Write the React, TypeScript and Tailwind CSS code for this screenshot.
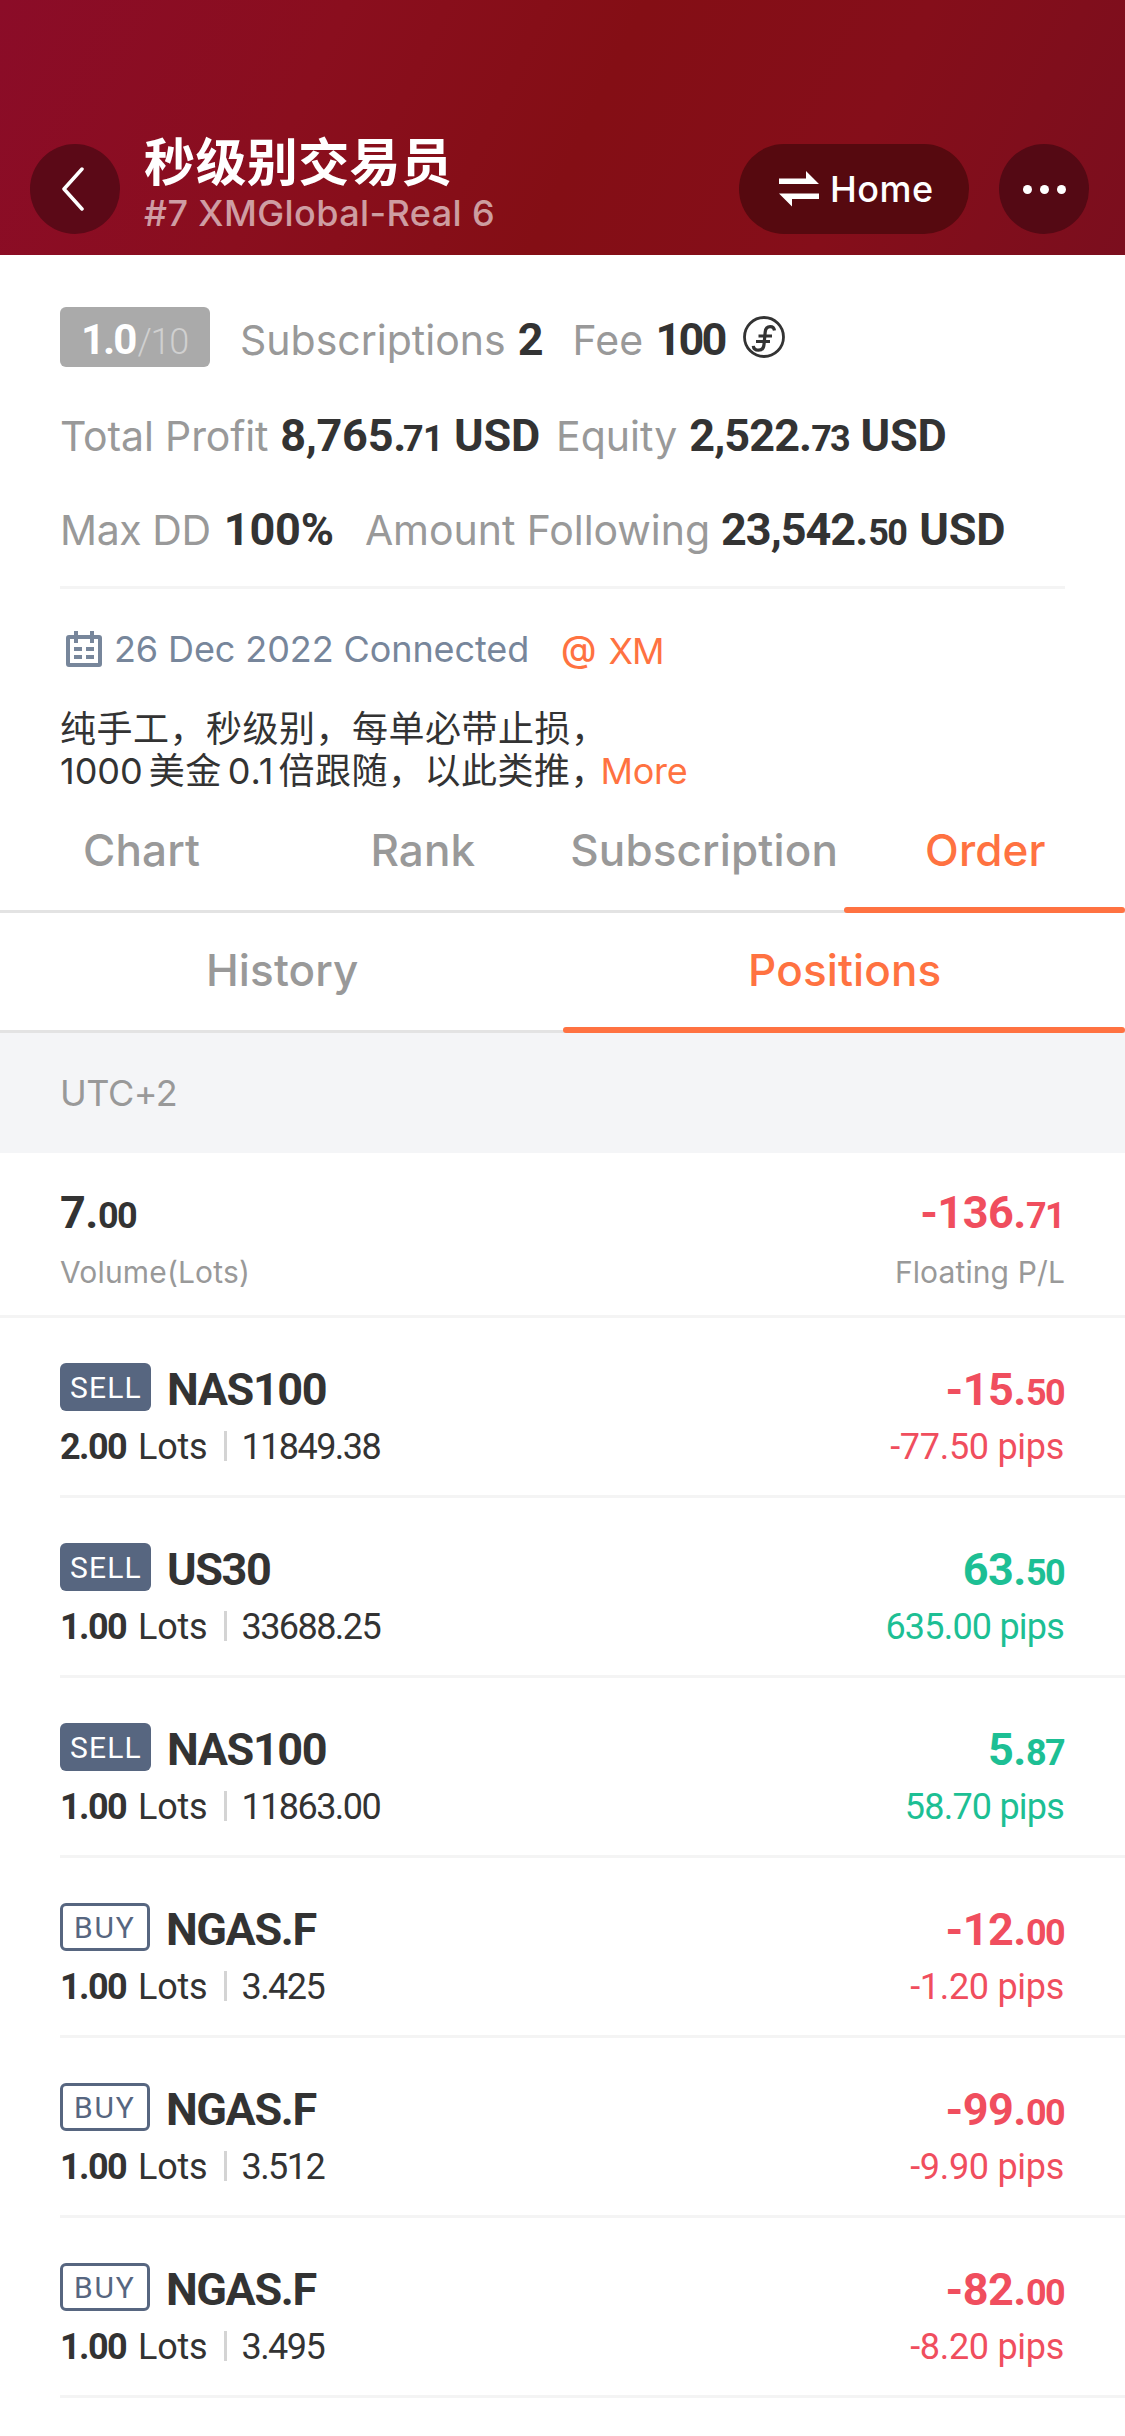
import React from 'react'

const positions = [
  { side: 'SELL', symbol: 'NAS100', lots: '2.00', price: '11849.38', profit: '-15.50', pips: '-77.50' },
  { side: 'SELL', symbol: 'US30', lots: '1.00', price: '33688.25', profit: '63.50', pips: '635.00' },
  { side: 'SELL', symbol: 'NAS100', lots: '1.00', price: '11863.00', profit: '5.87', pips: '58.70' },
  { side: 'BUY', symbol: 'NGAS.F', lots: '1.00', price: '3.425', profit: '-12.00', pips: '-1.20' },
  { side: 'BUY', symbol: 'NGAS.F', lots: '1.00', price: '3.512', profit: '-99.00', pips: '-9.90' },
  { side: 'BUY', symbol: 'NGAS.F', lots: '1.00', price: '3.495', profit: '-82.00', pips: '-8.20' },
]

function SwapIcon() {
  return (
    <svg viewBox="0 0 40 36" fill="currentColor" className="h-9 w-10">
      <path d="M0 7.5h27V0l13 13H0V7.5Z" />
      <path d="M40 28H13v7.5L0 22.5h40V28Z" />
    </svg>
  )
}

function CoinIcon({ className }: { className?: string }) {
  return (
    <svg viewBox="0 0 42 42" fill="none" stroke="currentColor" className={className}>
      <circle cx="21" cy="21" r="19.5" strokeWidth="2.8" />
      <path d="M31.5 14.5c-.4-2.6-2-3.8-4.3-3.8-3 0-4.7 2-5 5.3L21 28.5c-.3 3.5-2 5.7-5.5 5.7-3 0-5-1.500-5.200-4.300" strokeWidth="3.2" />
      <path d="M15.5 20H29M13 25.5h14" strokeWidth="3" />
    </svg>
  )
}

function CalendarIcon({ className }: { className?: string }) {
  return (
    <svg viewBox="0 0 36 36" fill="none" stroke="currentColor" strokeWidth="4" className={className}>
      <rect x="2" y="6" width="32" height="28" rx="1" />
      <path d="M10 0v12M26 0v12" />
      <path d="M8 18h8M20 18h8M8 26h8M20 26h8" />
    </svg>
  )
}

function Tabs({ items, active }: { items: string[]; active: string }) {
  return (
    <div className="flex h-[120px] border-b-[3px] border-[#e3e3e3] font-['Inter',sans-serif] text-[44px] leading-[60px] font-medium tracking-[0.13px]">
      {items.map((item) => (
        <div key={item} className="flex h-[120px] flex-1 basis-0 flex-col justify-between pt-[27px]">
          <span className={item === active ? 'pl-0.5 text-center text-[#ff7241]' : 'pl-0.5 text-center text-[#999999]'}>{item}</span>
          {item === active && <span className="h-1.5 rounded-full bg-[#ff7241]" />}
        </div>
      ))}
    </div>
  )
}

// Amount with its decimals set smaller than the whole part
function Amount({ value }: { value: string }) {
  const [whole, cents] = value.split('.')
  return (
    <>
      <span className="text-[45px] tracking-[-0.5px]">{whole}.</span>
      <span className="text-[36px] tracking-[-1.6px]">{cents}</span>
    </>
  )
}

export default function App() {
  return (
    <div className="h-[2436px] w-[1125px] overflow-hidden bg-white font-['Roboto',sans-serif] text-[#333333]">
      <header className="flex h-[255px] bg-linear-[115deg,#8b0c28_0%,#8a0e1e_28%,#840e15_52%,#850e1a_75%,#7b0e1e_100%] px-[30px] pt-[129px] font-['Inter','Noto_Sans_CJK_SC',sans-serif] text-white">
        <div className="mt-[15px] flex h-[90px] w-[90px] items-center justify-center rounded-full bg-[#5b0917]">
          <svg viewBox="0 0 24 44" fill="none" className="mr-[5px] h-11 w-6">
            <path d="M21 2 3 22l18 20" stroke="currentColor" strokeWidth="3.5" strokeLinecap="round" strokeLinejoin="round" />
          </svg>
        </div>
        <div className="ml-6">
          <h1 className="pt-1 text-[51px] leading-[60px] font-bold tracking-[0.4px]">秒级别交易员</h1>
          <p className="text-[36px] leading-[40px] font-medium tracking-[0.4px] text-white/60">#7 XMGlobal-Real 6</p>
        </div>
        <div className="mt-[15px] ml-auto flex h-[90px] w-[230px] items-center gap-[11px] rounded-full bg-[#56090f] pl-10">
          <SwapIcon />
          <span className="text-[36px] font-medium tracking-[0.5px]">Home</span>
        </div>
        <div className="mt-[15px] mr-[6px] ml-[30px] flex h-[90px] w-[90px] items-center justify-center gap-2 rounded-full bg-[#540914]">
          <span className="h-[9px] w-[9px] rounded-full bg-white" />
          <span className="h-[9px] w-[9px] rounded-full bg-white" />
          <span className="h-[9px] w-[9px] rounded-full bg-white" />
        </div>
      </header>

      <section className="px-[60px] pt-[52px] whitespace-nowrap">
        <div className="flex h-[60px] leading-[60px]">
          <div className="flex h-[60px] w-[150px] items-baseline rounded-md bg-[#aaaaaa] pt-[3px] pl-[21px]">
            <span className="text-[42px] font-bold tracking-[-2px] text-white">1.0</span>
            <span className="ml-0.5 text-[36px] font-light tracking-[-1.2px] text-[#d0d0d0]">/10</span>
          </div>
          <div className="mt-[3px] ml-[30px] flex items-baseline">
            <span className="font-['Inter',sans-serif] text-[41px] text-[#999999]">Subscriptions</span>
            <b className="ml-3 text-[45px]">2</b>
            <span className="ml-[29px] font-['Inter',sans-serif] text-[41px] tracking-[0.2px] text-[#999999]">Fee</span>
            <b className="ml-3 text-[45px] tracking-[-2.8px]">100</b>
          </div>
          <CoinIcon className="mt-[9px] ml-[18px] h-[42px] w-[42px]" />
        </div>
        <div className="mt-[39px] flex h-[60px] items-baseline leading-[60px]">
          <span className="font-['Inter',sans-serif] text-[41px] tracking-[-0.14px] text-[#999999]">Total Profit</span>
          <b className="ml-3 text-[45px] tracking-[-0.3px]">8,765.</b>
          <b className="-ml-[3px] text-[36px] tracking-[-0.6px]">71</b>
          <b className="ml-[11px] text-[45px] tracking-[-0.2px]">USD</b>
          <span className="ml-4 font-['Inter',sans-serif] text-[41px] text-[#999999]">Equity</span>
          <b className="ml-3 text-[45px] tracking-[-0.9px]">2,522.</b>
          <b className="text-[36px] tracking-[-2px]">73</b>
          <b className="ml-3 text-[45px] tracking-[-0.2px]">USD</b>
        </div>
        <div className="mt-[34px] flex h-[60px] items-baseline leading-[60px]">
          <span className="font-['Inter',sans-serif] text-[41px] tracking-[-0.4px] text-[#999999]">Max DD</span>
          <b className="ml-[13px] text-[45px] tracking-[-0.15px]">100%</b>
          <span className="ml-[31px] font-['Inter',sans-serif] text-[41px] tracking-[-0.05px] text-[#999999]">Amount Following</span>
          <b className="ml-[11px] text-[45px] tracking-[-1px]">23,542.</b>
          <b className="ml-px text-[36px] tracking-[-1.6px]">50</b>
          <b className="ml-[13px] text-[45px] tracking-[-0.2px]">USD</b>
        </div>
        <div className="mt-[26px] h-[3px] bg-[#f4f4f4]" />

        <div className="mt-[36px] flex h-12 font-['Inter',sans-serif] text-[36px] leading-[48px]">
          <CalendarIcon className="mt-1.5 ml-1.5 h-9 w-9 text-[#77869b]" />
          <span className="ml-3 tracking-[-0.1px] text-[#77869b]">26 Dec 2022 Connected</span>
          <span className="ml-8 font-medium text-[#ff7241]">@</span>
          <span className="mt-[2px] ml-3 tracking-[-1px] text-[#ff7241]">XM</span>
        </div>
        <p className="mt-[35px] h-[84px] font-['Inter','Noto_Sans_CJK_SC',sans-serif] text-[36px] leading-[42px] tracking-[0.5px]">
          纯手工，秒级别，每单必带止损，
          <br />
          <span className="tracking-normal">1000</span>
          <span className="mx-1.5">美金</span>
          <span className="mr-1 tracking-[1px]">0.1</span>
          倍跟随，以此类推<span className="tracking-[-6px]">，</span>
          <span className="tracking-[-0.3px] text-[#ff7241]">More</span>
        </p>
      </section>

      <div className="mt-px">
        <Tabs items={['Chart', 'Rank', 'Subscription', 'Order']} active="Order" />
        <Tabs items={['History', 'Positions']} active="Positions" />
      </div>

      <div className="flex h-[120px] items-center bg-[#f4f5f7] px-[60px] font-['Inter',sans-serif] text-[36px] tracking-[-0.5px] text-[#999999]">
        UTC+2
      </div>

      <div className="flex h-[165px] justify-between border-b-[3px] border-[#f4f4f4] px-[60px] pt-[30px]">
        <div>
          <div className="flex h-[60px] items-baseline leading-[60px] font-bold">
            <Amount value="7.00" />
          </div>
          <div className="mt-[11px] font-['Inter',sans-serif] text-[30px] leading-[36px] tracking-[0.16px] text-[#999999]">Volume(Lots)</div>
        </div>
        <div>
          <div className="mr-px flex h-[60px] items-baseline justify-end leading-[60px] font-bold text-[#f04e5e]">
            <Amount value="-136.71" />
          </div>
          <div className="mt-[11px] font-['Inter',sans-serif] text-[30px] leading-[36px] tracking-[0.12px] text-[#999999]">Floating P/L</div>
        </div>
      </div>

      <ul>
        {positions.map((p, i) => (
          <li
            key={i}
            className="ml-[60px] flex h-[180px] justify-between border-b-[3px] border-[#f4f4f4] pt-[42px] pr-[61px] whitespace-nowrap"
          >
            <div>
              <div className="flex h-[60px] leading-[60px]">
                {p.side === 'SELL' ? (
                  <span className="mt-[3px] h-12 w-[91px] rounded-md bg-[#576680] pl-[10px] text-[30px] leading-[49px] tracking-[1.2px] text-white">SELL</span>
                ) : (
                  <span className="mt-[3px] h-12 w-[90px] rounded-md border-[3px] border-[#576680] pl-[11px] text-[30px] leading-[43px] tracking-[1.8px] text-[#576680]">BUY</span>
                )}
                <span className="ml-4 text-[45px] font-bold tracking-[-1.4px]">{p.symbol}</span>
              </div>
              <div className="mt-[7px] flex h-10 text-[36px] leading-[40px]">
                <b className="tracking-[-1.6px]">{p.lots}</b>
                <span className="ml-3 tracking-[-0.2px]">Lots</span>
                <span className="mt-1 ml-4 h-[30px] w-[3px] bg-[#d4d4d4]" />
                <span className="ml-[15px] tracking-[-1.56px]">{p.price}</span>
              </div>
            </div>
            <div
              className={
                p.profit.startsWith('-')
                  ? 'text-right tracking-[-0.3px] text-[#f04e5e]'
                  : 'text-right tracking-[-0.8px] text-[#1dbf94]'
              }
            >
              <div className="flex h-[60px] items-baseline justify-end leading-[60px] font-bold">
                <Amount value={p.profit} />
              </div>
              <div className="mt-[7px] text-[36px] leading-[40px]">{p.pips} pips</div>
            </div>
          </li>
        ))}
      </ul>
    </div>
  )
}
